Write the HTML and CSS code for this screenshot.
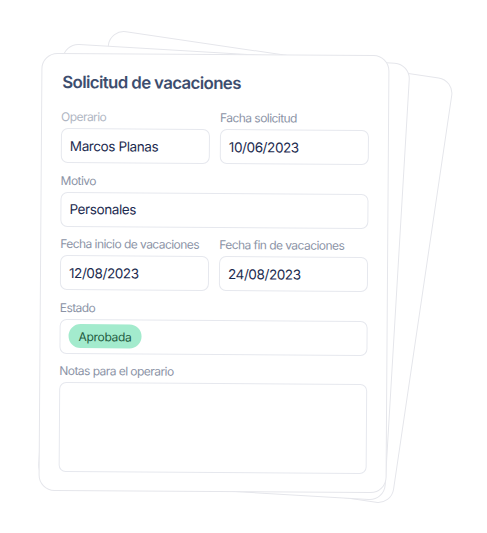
FILE: index.html
```html
<!DOCTYPE html>
<html lang="es">
<head>
<meta charset="utf-8">
<title>Solicitud de vacaciones</title>
<link rel="stylesheet" href="styles.css">
</head>
<body>
<div class="stage">
  <div class="sheet sheet-back"></div>
  <div class="sheet sheet-middle"></div>
  <div class="sheet sheet-front">
    <h1 class="title">Solicitud de vacaciones</h1>
    <div class="fields">
      <div class="row two">
        <div class="field">
          <div class="label label-muted">Operario</div>
          <div class="input">Marcos Planas</div>
        </div>
        <div class="field">
          <div class="label">Facha solicitud</div>
          <div class="input">10/06/2023</div>
        </div>
      </div>
      <div class="field">
        <div class="label">Motivo</div>
        <div class="input">Personales</div>
      </div>
      <div class="row two">
        <div class="field">
          <div class="label">Fecha inicio de vacaciones</div>
          <div class="input">12/08/2023</div>
        </div>
        <div class="field">
          <div class="label">Fecha fin de vacaciones</div>
          <div class="input">24/08/2023</div>
        </div>
      </div>
      <div class="field">
        <div class="label">Estado</div>
        <div class="input">
          <span class="pill">Aprobada</span>
        </div>
      </div>
      <div class="field">
        <div class="label">Notas para el operario</div>
        <div class="input textarea"></div>
      </div>
    </div>
  </div>
</div>
</body>
</html>
```
FILE: styles.css
```css
* {
  box-sizing: border-box;
}

html, body {
  margin: 0;
  padding: 0;
  background: #ffffff;
}

body {
  font-family: Inter, "Noto Sans", sans-serif;
  width: 487px;
  height: 533px;
  overflow: hidden;
}

.stage {
  display: grid;
  grid-template-columns: 348px;
  grid-template-rows: auto;
  align-items: start;
  padding: 54px 0 0 40px;
}

.sheet {
  grid-area: 1 / 1;
  width: 348px;
  background: #ffffff;
  border: 1.5px solid #e5e6eb;
  border-radius: 16px;
}

.sheet-back {
  height: 430px;
  transform: translate(37px, -2px) rotate(8.4deg);
}

.sheet-middle {
  height: 438px;
  transform: translate(10px, -1px) rotate(3.4deg);
}

.sheet-front {
  transform: rotate(0.4deg);
  padding: 17px 19px 18px 19px;
}

.title {
  margin: 0 0 15px 1px;
  font-size: 16.8px;
  line-height: 22px;
  font-weight: 600;
  color: #3d4d6e;
  letter-spacing: -0.6px;
}

.fields {
  display: flex;
  flex-direction: column;
  gap: 8.5px;
}

.row.two {
  display: grid;
  grid-template-columns: 1fr 1fr;
  column-gap: 10px;
}

.field {
  display: flex;
  flex-direction: column;
  gap: 2px;
  min-width: 0;
}

.label {
  font-size: 12px;
  line-height: 18px;
  color: #8b93a6;
  letter-spacing: -0.55px;
  white-space: nowrap;
}

.label-muted {
  color: #b0b6c3;
}

.input {
  height: 35px;
  border: 1px solid #e6e8ee;
  border-radius: 7px;
  padding: 0 8px;
  display: flex;
  align-items: center;
  font-size: 13.5px;
  letter-spacing: -0.4px;
  color: #1c2b4f;
  background: #ffffff;
}

.textarea {
  height: 89.5px;
}

.pill {
  display: inline-flex;
  align-items: center;
  height: 23.5px;
  padding: 0 10px;
  border-radius: 12px;
  background: #a3ebcd;
  color: #1d5a3e;
  font-size: 12px;
  letter-spacing: -0.3px;
}
```
